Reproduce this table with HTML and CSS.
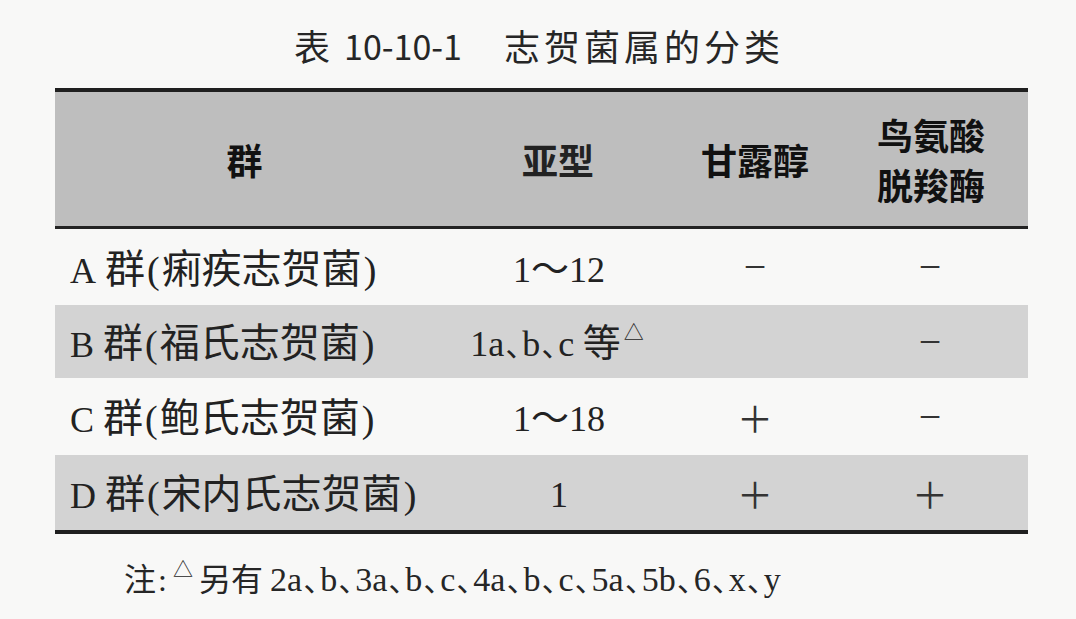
FILE: index.html
```html
<!DOCTYPE html>
<html lang="zh-CN">
<head>
<meta charset="utf-8">
<title>表 10-10-1 志贺菌属的分类</title>
<link rel="stylesheet" href="styles.css">
</head>
<body>
<div class="page">
  <h1 class="title"><span>表</span><span class="title-num">10-10-1</span><span class="title-name">志贺菌属的分类</span></h1>
  <div class="table">
    <div class="row head">
      <div class="cell c1 center">群</div>
      <div class="cell c2">亚型</div>
      <div class="cell c3">甘露醇</div>
      <div class="cell c4 two">鸟氨酸<br>脱羧酶</div>
    </div>
    <div class="row r1">
      <div class="cell c1"><span class="lat">A</span> 群<span class="par">(</span>痢疾志贺菌<span class="par">)</span></div>
      <div class="cell c2"><span class="lat">1</span>～<span class="lat">12</span></div>
      <div class="cell c3 sign">−</div>
      <div class="cell c4 sign">−</div>
    </div>
    <div class="row r2 shade">
      <div class="cell c1"><span class="lat">B</span> 群<span class="par">(</span>福氏志贺菌<span class="par">)</span></div>
      <div class="cell c2"><span class="lat">1a</span><span class="dun">､</span><span class="lat">b</span><span class="dun">､</span><span class="lat">c</span> 等<sup class="tri">△</sup></div>
      <div class="cell c3 sign"></div>
      <div class="cell c4 sign">−</div>
    </div>
    <div class="row r3">
      <div class="cell c1"><span class="lat">C</span> 群<span class="par">(</span>鲍氏志贺菌<span class="par">)</span></div>
      <div class="cell c2"><span class="lat">1</span>～<span class="lat">18</span></div>
      <div class="cell c3 sign plus">＋</div>
      <div class="cell c4 sign">−</div>
    </div>
    <div class="row r4 shade">
      <div class="cell c1"><span class="lat">D</span> 群<span class="par">(</span>宋内氏志贺菌<span class="par">)</span></div>
      <div class="cell c2"><span class="lat">1</span></div>
      <div class="cell c3 sign plus">＋</div>
      <div class="cell c4 sign plus">＋</div>
    </div>
  </div>
  <p class="note">注<span class="colon">:</span><sup class="tri">△</sup>另有 <span class="lat">2a</span><span class="dun">､</span><span class="lat">b</span><span class="dun">､</span><span class="lat">3a</span><span class="dun">､</span><span class="lat">b</span><span class="dun">､</span><span class="lat">c</span><span class="dun">､</span><span class="lat">4a</span><span class="dun">､</span><span class="lat">b</span><span class="dun">､</span><span class="lat">c</span><span class="dun">､</span><span class="lat">5a</span><span class="dun">､</span><span class="lat">5b</span><span class="dun">､</span><span class="lat">6</span><span class="dun">､</span><span class="lat">x</span><span class="dun">､</span><span class="lat">y</span></p>
</div>
</body>
</html>
```

FILE: styles.css
```css
html, body {
  margin: 0;
  padding: 0;
  background: #f8f8f7;
}
body {
  font-family: "Noto Sans CJK SC", "Noto Sans", sans-serif;
  color: #1e1e1e;
}
.page {
  width: 1076px;
  height: 619px;
  overflow: hidden;
}
.title {
  margin: 0;
  height: 88px;
  display: flex;
  align-items: center;
  justify-content: center;
  font-family: "Noto Sans CJK SC", sans-serif;
  font-weight: 400;
  font-size: 36px;
  padding-left: 2px;
  padding-top: 2px;
  box-sizing: border-box;
  color: #262626;
}
.title-num {
  margin-left: 14px;
  margin-right: 42px;
  font-size: 34px;
}
.title-name {
  letter-spacing: 4px;
}
.table {
  margin-left: 55px;
  width: 973px;
  border-top: 4px solid #1f1f1f;
  border-bottom: 4px solid #1f1f1f;
}
.row {
  display: grid;
  grid-template-columns: 385px 238px 154px 196px;
  align-items: center;
}
.head {
  height: 134px;
  background: #bebebe;
  border-bottom: 3px solid #232323;
  font-weight: 700;
  color: #111;
}
.r1 { height: 76px; }
.r2 { height: 73px; }
.r3 { height: 77px; }
.r4 { height: 75px; }
.shade { background: #d3d3d3; }
.cell {
  text-align: center;
  font-size: 38px;
  line-height: 1;
}
.head .cell { font-size: 36px; }
.head .c1 { padding-right: 6px; }
.head .c2 { padding-right: 2px; }
.head .c4 {
  line-height: 50px;
  padding-left: 2px;
}
.row .c1:not(.center) {
  text-align: left;
  padding-left: 15px;
  font-size: 40px;
  color: #222;
}
.lat {
  font-family: "Liberation Serif", "DejaVu Serif", serif;
  font-size: 36px;
}
.par {
  font-family: "Liberation Serif", serif;
  font-size: 38px;
  margin: 0 2px;
}
.dun {
  font-family: "Noto Sans CJK SC", sans-serif;
  font-size: 30px;
  margin: 0 1px 0 2px;
}
.c2 {
  color: #222;
}
.r2 .c2 {
  padding-right: 4px;
}
.tri {
  font-size: 20px;
  vertical-align: 16px;
  line-height: 0;
  margin-left: 3px;
}
.sign {
  font-family: "Liberation Serif", serif;
  font-size: 40px;
  color: #333;
}
.sign.plus {
  font-family: "Noto Sans CJK SC", sans-serif;
  font-size: 36px;
}
.note {
  margin: 27px 0 0 124px;
  font-size: 32px;
  color: #262626;
  line-height: 1;
}
.note .colon {
  font-family: "Liberation Serif", serif;
  margin: 0 6px 0 2px;
}
.note .lat {
  font-size: 34px;
}
.note .dun {
  font-size: 30px;
  margin: 0 1px 0 2px;
}
.note .tri {
  font-size: 20px;
  vertical-align: 14px;
  margin-left: 0;
  margin-right: 6px;
}
```
